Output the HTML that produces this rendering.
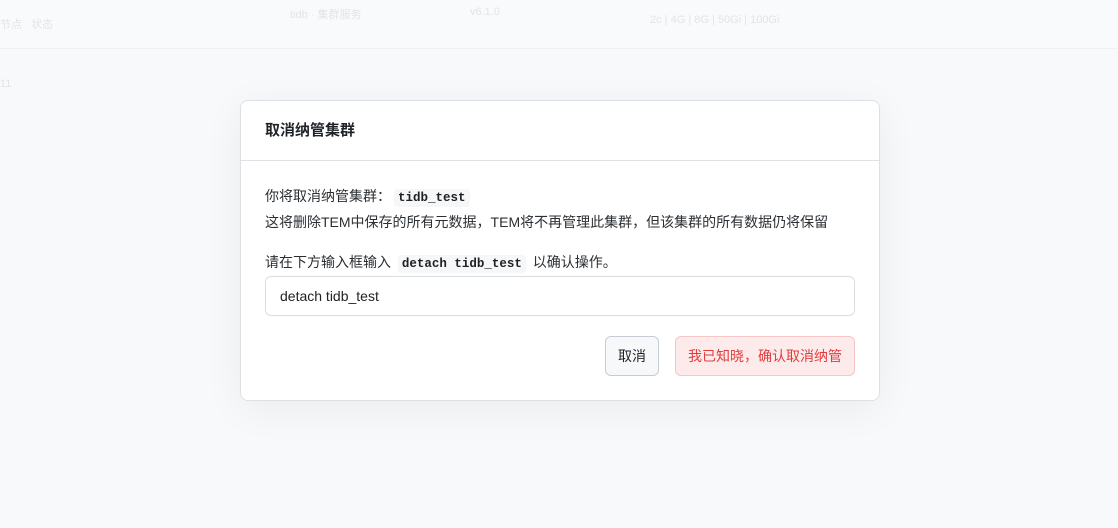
<!DOCTYPE html>
<html><head><meta charset="utf-8"><style>
body{margin:0;width:1118px;height:528px;background:#f8f9fb;font-family:"Liberation Sans","Noto Sans CJK SC",sans-serif;position:relative;overflow:hidden;color:#1f2328}
.bg{position:absolute;color:#e2e4e8;font-size:11px}
.hdr{position:absolute;left:0;top:0;width:1118px;height:48px;background:#f9fafb;border-bottom:1px solid #f0f1f4}
.modal{position:absolute;left:240px;top:100px;width:638px;height:299px;background:#fff;border:1px solid #dde1e6;border-radius:8px;box-shadow:0 8px 40px rgba(0,0,0,0.06)}
.title{height:60px;border-bottom:1px solid #dee2e6;font-size:15px;font-weight:bold;line-height:60px;padding-left:24px;box-sizing:border-box}
.t{position:absolute;left:24px;font-size:14px;color:#2b2f33;white-space:nowrap}
code{font-family:"Liberation Mono",monospace;font-weight:bold;font-size:12.5px;background:#f6f7f8;padding:2px 4px;border-radius:3px;color:#222;margin:0 3px}
.inp{position:absolute;left:24px;top:175px;width:590px;height:40px;box-sizing:border-box;border:1px solid #d8dde2;border-radius:6px;font-size:14px;line-height:38px;padding-left:14px;color:#222}
.b1{position:absolute;left:364px;top:235px;width:54px;height:40px;box-sizing:border-box;border:1px solid #c5ccd3;border-radius:6px;background:#f6f8fa;font-size:14px;line-height:38px;text-align:center}
.b2{position:absolute;left:434px;top:235px;width:180px;height:40px;box-sizing:border-box;border:1px solid #f6c5c5;border-radius:6px;background:#fdebeb;font-size:14px;line-height:38px;text-align:center;color:#e03c3c}
</style></head><body>
<div class="hdr"></div>
<div class="bg" style="left:0;top:16px">节点 &nbsp; 状态</div>
<div class="bg" style="left:290px;top:6px">tidb · 集群服务</div>
<div class="bg" style="left:470px;top:6px">v6.1.0</div>
<div class="bg" style="left:650px;top:14px">2c | 4G | 8G | 50Gi | 100Gi</div>
<div class="bg" style="left:0;top:78px">11</div>
<div class="modal">
<div class="title">取消纳管集群</div>
<div class="t" style="top:85px">你将取消纳管集群：<code>tidb_test</code></div>
<div class="t" style="top:111px">这将删除TEM中保存的所有元数据，TEM将不再管理此集群，但该集群的所有数据仍将保留</div>
<div class="t" style="top:151px">请在下方输入框输入 <code>detach tidb_test</code> 以确认操作。</div>
<div class="inp">detach tidb_test</div>
<div class="b1">取消</div>
<div class="b2">我已知晓，确认取消纳管</div>
</div>
</body></html>
